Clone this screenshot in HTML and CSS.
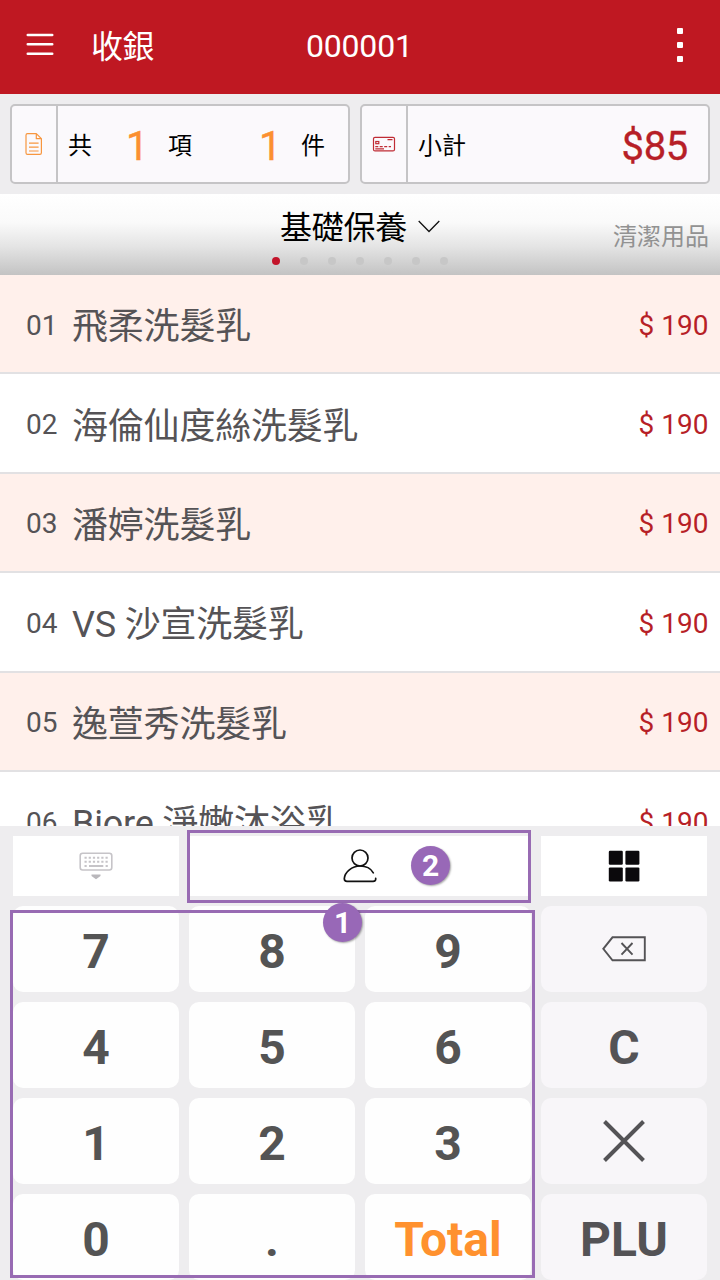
FILE: index.html
```html
<!DOCTYPE html>
<html lang="zh-Hant">
<head>
<meta charset="utf-8">
<title>收銀</title>
<link rel="stylesheet" href="styles.css">
</head>
<body>
<div class="app">
  <header class="topbar">
    <svg class="menu" width="28" height="24" viewBox="0 0 28 24" stroke="#fff" stroke-width="2.6" stroke-linecap="round"><path d="M1.800 2H26.200M1.800 11.200H26.200M1.800 20.700H26.200"/></svg>
    <h1 class="topbar-title">收銀</h1>
    <span class="order-no">000001</span>
    <svg class="more" width="6" height="34" viewBox="0 0 6 34" fill="#fff"><rect width="6" height="6" rx="1"/><rect y="14" width="6" height="6" rx="1"/><rect y="28" width="6" height="6" rx="1"/></svg>
  </header>

  <section class="summary">
    <div class="box count-box">
      <div class="box-icon">
        <svg width="18" height="24" viewBox="0 0 18 24" fill="none" stroke="#f7963f" stroke-width="1.2" stroke-linejoin="round"><path d="M2.500 1.600H11.300L16.400 6.700V20.800Q16.400 22.400 14.900 22.400H2.500Q1 22.400 1 20.800V3.200Q1 1.600 2.500 1.600ZM11.300 1.600V6.700H16.400M4 11.200H13.600M4 15.200H13.600M4 19H13.600"/></svg>
      </div>
      <div class="box-body">
        <span>共</span><b class="num num-items">1</b><span>項</span><b class="num num-pieces">1</b><span>件</span>
      </div>
    </div>
    <div class="box total-box">
      <div class="box-icon">
        <svg width="24" height="16" viewBox="0 0 24 16" fill="none" stroke="#c02c35" stroke-width="1.2"><rect x="1.500" y="1.300" width="21" height="13.600" rx="1.500"/><rect x="3.800" y="5.500" width="3" height="2.200"/><path d="M15.500 3.600H20.500M3.300 10.700H6.300M7.700 10.700H10.700M12.200 10.700H15.200M16.700 10.700H19M3.300 12.900H12"/></svg>
      </div>
      <div class="box-body"><span>小計</span><b class="subtotal">$85</b></div>
    </div>
  </section>

  <nav class="category">
    <div class="category-now">
      <span>基礎保養</span>
      <svg width="22" height="13" viewBox="0 0 22 13" fill="none" stroke="#111" stroke-width="1.300"><path d="M.7 1L11 11.500L21.300 1"/></svg>
    </div>
    <div class="dots"><i class="on"></i><i></i><i></i><i></i><i></i><i></i><i></i></div>
    <span class="category-next">清潔用品</span>
  </nav>

  <main class="list">
    <div class="item"><span class="no">01</span><span class="name">飛柔洗髮乳</span><span class="price">$ 190</span></div>
    <div class="item"><span class="no">02</span><span class="name">海倫仙度絲洗髮乳</span><span class="price">$ 190</span></div>
    <div class="item"><span class="no">03</span><span class="name">潘婷洗髮乳</span><span class="price">$ 190</span></div>
    <div class="item"><span class="no">04</span><span class="name">VS 沙宣洗髮乳</span><span class="price">$ 190</span></div>
    <div class="item"><span class="no">05</span><span class="name">逸萱秀洗髮乳</span><span class="price">$ 190</span></div>
    <div class="item"><span class="no">06</span><span class="name">Biore 淨嫩沐浴乳</span><span class="price">$ 190</span></div>
  </main>

  <section class="pad">
    <div class="tools">
      <button class="tool">
        <svg width="34" height="28" viewBox="0 0 34 28" fill="none" stroke="#c6c4c8" stroke-width="1.600"><rect x="1.200" y="1.200" width="31.600" height="16.800" rx="2.500"/><path stroke-width="2" stroke-dasharray="2.200 2" d="M5.500 5.800H29M5.500 9.800H29"/><path stroke-width="2" d="M5.500 14H7.700M10 14H24.300M26.600 14H28.800"/><path fill="#b9b7bb" stroke="none" d="M12.500 22.500H21.500V24L17 27.300L12.500 24Z"/></svg>
      </button>
      <button class="tool tool-member">
        <svg width="34" height="36" viewBox="0 0 34 36" fill="none" stroke="#111" stroke-width="1.700" stroke-linecap="round"><circle cx="17" cy="10" r="8"/><path d="M30.300 24.800C28 20.800 22.800 18 17 18C9 18 1.800 24 1.300 30.500Q1.300 33.400 4 33.400H30Q33 33.400 32.700 30.300"/></svg>
      </button>
      <button class="tool">
        <svg width="32" height="32" viewBox="0 0 32 32" fill="#0b090c"><rect x=".8" y=".8" width="14" height="14" rx="1.200"/><rect x="17.400" y=".8" width="14" height="14" rx="1.200"/><rect x=".8" y="17.400" width="14" height="14" rx="1.200"/><rect x="17.400" y="17.400" width="14" height="14" rx="1.200"/></svg>
      </button>
    </div>
    <div class="keys">
      <button class="key">7</button><button class="key">8</button><button class="key">9</button>
      <button class="key fn"><svg width="44" height="26" viewBox="0 0 44 26" fill="none" stroke="#545356" stroke-width="1.900"><path d="M10.500 1.300H42.800V24.300H10.500L1.300 12.800ZM19.500 7L30.500 18.600M30.500 7L19.500 18.600"/></svg></button>
      <button class="key">4</button><button class="key">5</button><button class="key">6</button><button class="key fn">C</button>
      <button class="key">1</button><button class="key">2</button><button class="key">3</button>
      <button class="key fn"><svg width="42" height="42" viewBox="0 0 42 42" stroke="#545356" stroke-width="4"><path d="M1.500 1.500L40.500 40.500M40.500 1.500L1.500 40.500"/></svg></button>
      <button class="key">0</button><button class="key">.</button><button class="key total">Total</button><button class="key fn">PLU</button>
    </div>
    <div class="frame frame-keys"></div>
    <div class="frame frame-member"></div>
    <span class="mark mark-1">1</span>
    <span class="mark mark-2">2</span>
  </section>
</div>
</body>
</html>
```
FILE: styles.css
```css
* { box-sizing: border-box; }
body {
  margin: 0;
  font-family: Roboto, "Noto Sans CJK TC", sans-serif;
  background: #eeedef;
}
svg { display: block; }
button { border: 0; padding: 0; font: inherit; }
.app {
  width: 720px;
  height: 1280px;
  overflow: hidden;
  display: flex;
  flex-direction: column;
}

.topbar {
  height: 94px;
  flex: none;
  background: #bf1822;
  color: #fff;
  display: grid;
  grid-template-columns: 65px 215px 157px 1fr;
  align-items: center;
  padding: 0 37px 5px 26px;
  font-size: 32px;
}
.topbar-title { margin: 0; padding-top: 4px; font-size: 32px; font-weight: 400; line-height: 40px; letter-spacing: -.5px; }
.order-no { line-height: 40px; padding-top: 2px; letter-spacing: -.2px; }
.more { justify-self: end; }

.summary {
  height: 100px;
  flex: none;
  display: flex;
  gap: 10px;
  padding: 10px;
}
.box {
  height: 80px;
  display: flex;
  border: 2px solid #c5c4c6;
  border-radius: 5px;
  background: #fbf9fc;
}
.count-box { width: 340px; }
.total-box { width: 350px; }
.box-icon {
  width: 46px;
  border-right: 2px solid #c5c4c6;
  display: flex;
  align-items: center;
  justify-content: center;
}
.box-body {
  flex: 1;
  display: flex;
  align-items: center;
  padding: 3px 20px 0 10px;
  font-size: 24px;
  line-height: 40px;
  color: #000;
}
.num { font-size: 40px; font-weight: 400; color: #fb9030; width: 24px; padding-top: 2px; -webkit-text-stroke: .4px; }
.num-items { margin: 0 18px 0 34px; }
.num-pieces { margin: 0 18px 0 67px; }
.subtotal { margin-left: auto; padding-top: 3px; font-size: 40px; font-weight: 400; letter-spacing: -.3px; color: #b71f27; -webkit-text-stroke: .3px; }

.category {
  height: 81px;
  flex: none;
  background: linear-gradient(#fff 0%, #fafafa 35%, #e4e4e4 65%, #c3c3c3 100%);
  display: grid;
  grid-template-columns: 160px 1fr 160px;
  grid-template-rows: 62px 10px;
}
.category-now {
  grid-column: 2;
  display: flex;
  justify-content: center;
  align-items: center;
  gap: 11px;
  font-size: 32px;
  line-height: 40px;
  letter-spacing: -.25px;
}
.category-now span { padding-top: 5px; }
.category-now svg { margin-top: 2px; }
.dots {
  grid-column: 2;
  grid-row: 2;
  display: flex;
  gap: 19.9px;
  justify-content: center;
  align-items: center;
}
.dots i { width: 8px; height: 8px; border-radius: 50%; background: #c7c7c7; }
.dots .on { background: #c3142a; }
.category-next {
  grid-column: 3;
  grid-row: 1 / 3;
  align-self: center;
  justify-self: end;
  padding: 13px 11px 0 0;
  font-size: 24px;
  line-height: 36px;
  color: #929292;
}

.list { height: 551px; flex: none; overflow: hidden; background: #fff; }
.item {
  height: 99.4px;
  display: flex;
  align-items: center;
  padding: 0 11.500px 0 26px;
  border-bottom: 2px solid #e2e1e3;
  background: #fff;
  font-size: 28px;
  line-height: 40px;
  color: #555356;
}
.item:nth-child(odd) { background: #fff0eb; }
.no { width: 46px; padding-top: 4px; }
.name { padding-top: 7px; font-size: 36px; letter-spacing: -.2px; }
.price { margin-left: auto; padding-top: 4px; color: #b71f27; }

.pad {
  position: relative;
  flex: 1;
  padding: 10px 13px 0;
  background: #eeedef;
}
.tools {
  display: grid;
  grid-template-columns: 166px 342px 166px;
  gap: 10px;
  height: 60px;
}
.tool { background: #fff; display: flex; align-items: center; justify-content: center; }
.keys {
  display: grid;
  grid-template-columns: repeat(4, 166px);
  grid-auto-rows: 86px;
  gap: 10px;
  margin-top: 10px;
}
.key {
  display: flex;
  align-items: center;
  justify-content: center;
  border-radius: 10px;
  background: #fefefe;
  color: #545454;
  font-size: 48px;
  font-weight: 700;
  line-height: 56px;
  padding-top: 6px;
}
.fn { background: #f8f6f9; color: #545356; }
.fn svg { margin-top: -6px; }
.total { color: #ff912e; }

.frame { position: absolute; border: 3px solid #986bb3; }
.frame-keys { left: 10px; top: 84px; width: 525px; height: 368px; }
.frame-member { left: 187px; top: 4px; width: 344px; height: 73px; }
.mark {
  position: absolute;
  width: 39px;
  height: 39px;
  border-radius: 50%;
  background: #9868b7;
  box-shadow: 1px 1px 2px rgba(0, 0, 0, .35);
  color: #fff;
  font: 700 30px/39px Roboto, sans-serif;
  text-align: center;
}
.mark-1 { left: 323px; top: 77px; }
.mark-2 { left: 411px; top: 20px; }
```
